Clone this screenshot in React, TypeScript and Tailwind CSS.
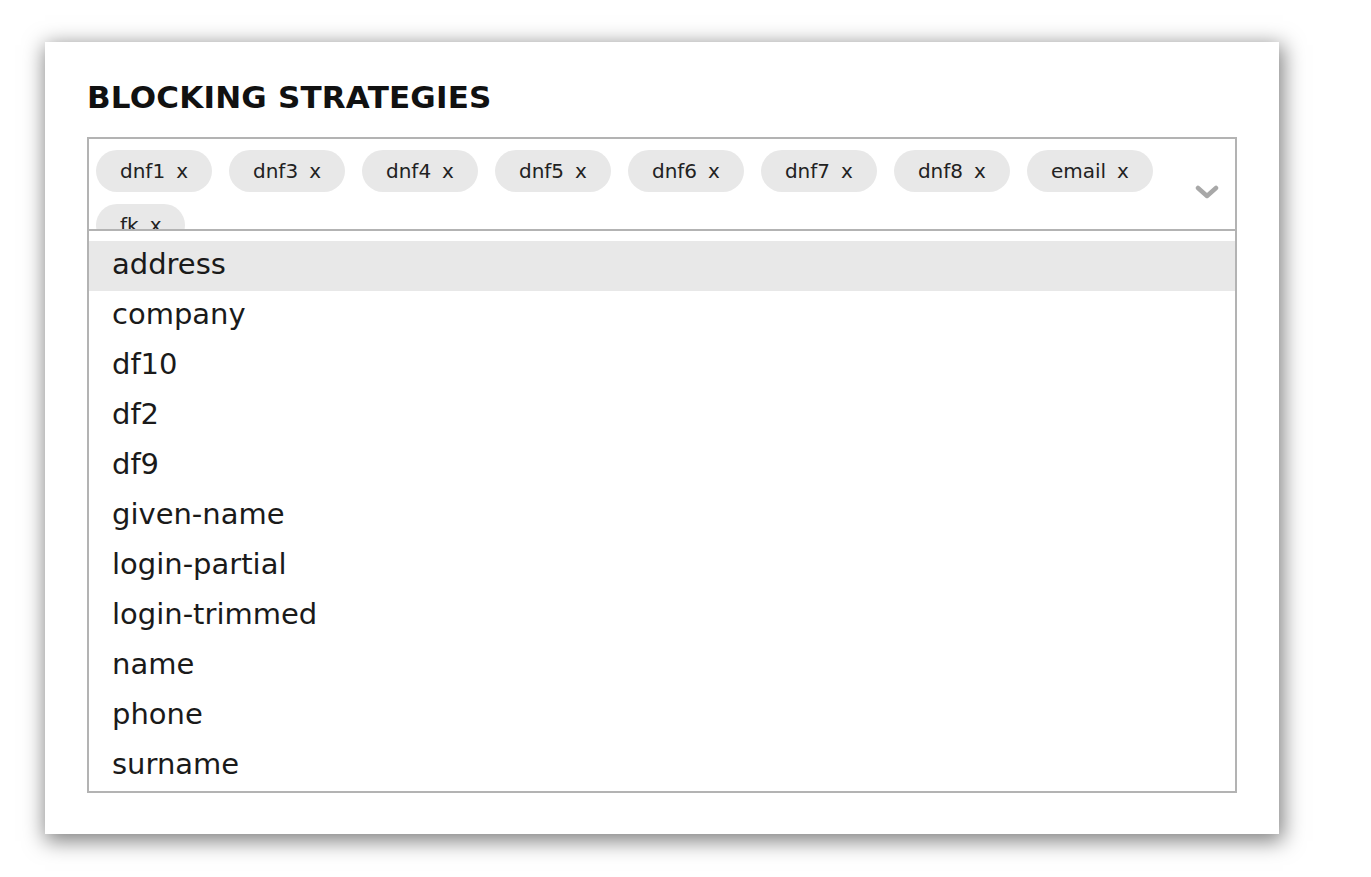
import React from "react";

const chips = ["dnf1", "dnf3", "dnf4", "dnf5", "dnf6", "dnf7", "dnf8", "email", "fk"];

const options = [
  "address",
  "company",
  "df10",
  "df2",
  "df9",
  "given-name",
  "login-partial",
  "login-trimmed",
  "name",
  "phone",
  "surname",
];

export default function App() {
  return (
    <div
      className="min-h-screen w-full bg-white pt-[42px] pl-[45px]"
      style={{ fontFamily: '"DejaVu Sans", "Noto Sans", sans-serif' }}
    >
      <div className="w-[1234px] h-[792px] bg-white shadow-[2px_5px_20px_2px_rgba(0,0,0,0.5)] px-[42px] pt-[40px]">
        <h1 className="text-[31px] leading-none h-[31px] font-semibold text-[#111111] tracking-[0.2px]">
          BLOCKING STRATEGIES
        </h1>

        <div className="relative mt-[24px]">
          <div className="h-[94px] border-2 border-[#b3b3b3] overflow-hidden">
            <div className="flex flex-wrap gap-x-[17px] gap-y-[12px] pl-[7px] pt-[11px] pr-[70px]">
              {chips.map((c) => (
                <div
                  key={c}
                  className="h-[42px] flex items-center rounded-full bg-[#e8e8e8] px-[24px] text-[20px] text-[#222222]"
                >
                  <span>{c}</span>
                  <span className="ml-[11px]">x</span>
                </div>
              ))}
            </div>
          </div>

          <svg
            className="absolute right-[18px] top-[47px]"
            width="24"
            height="16"
            viewBox="0 0 24 16"
          >
            <path
              d="M3 4 L12 12 L21 4"
              fill="none"
              stroke="#a8a8a8"
              strokeWidth="4.5"
              strokeLinecap="round"
              strokeLinejoin="round"
            />
          </svg>

          <div className="absolute left-0 right-0 top-[92px] bg-white border-2 border-[#b3b3b3] pt-[10px]">
            {options.map((o, i) => (
              <div
                key={o}
                className={
                  "h-[50px] flex items-center px-[23px] pb-[2px] text-[29px] text-[#1a1a1a] " +
                  (i === 0 ? "bg-[#e8e8e8]" : "")
                }
              >
                {o}
              </div>
            ))}
          </div>
        </div>
      </div>
    </div>
  );
}
